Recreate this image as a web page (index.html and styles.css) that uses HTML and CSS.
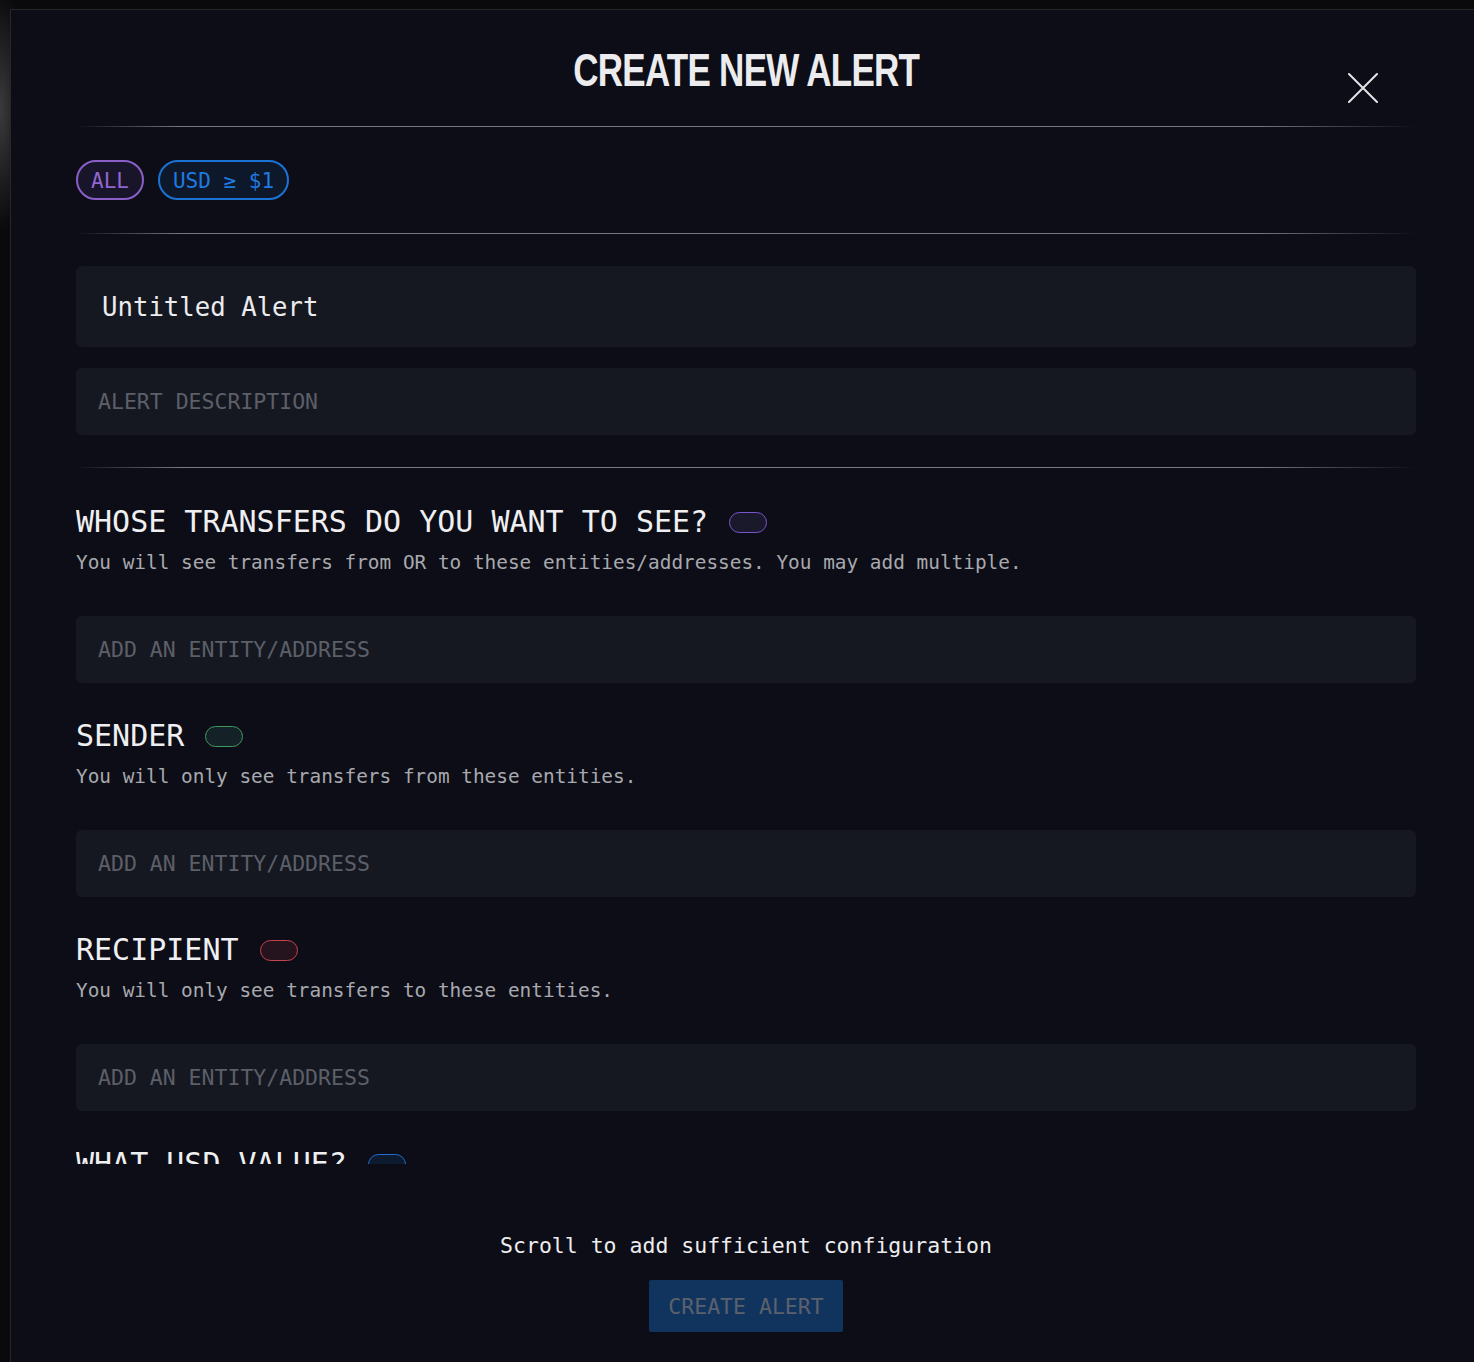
FILE: index.html
```html
<!DOCTYPE html>
<html lang="en">
<head>
<meta charset="utf-8">
<title>Create New Alert</title>
<link rel="stylesheet" href="styles.css">
</head>
<body>
<div class="modal">
  <header class="modal-header">
    <span class="spacer"></span>
    <h1 class="title"><span class="title-text">CREATE NEW ALERT</span></h1>
    <button class="close" aria-label="Close">
      <svg width="30" height="30" viewBox="0 0 30 30"><path d="M1 1 L29 29 M29 1 L1 29" stroke="#e4e4e6" stroke-width="2" fill="none" stroke-linecap="round"/></svg>
    </button>
  </header>
  <div class="divider"></div>
  <div class="scroll">
    <div class="tags">
      <span class="tag tag-all">ALL</span>
      <span class="tag tag-usd">USD ≥ $1</span>
    </div>
    <div class="divider gap-tags"></div>
    <div class="field field-title">Untitled Alert</div>
    <div class="field field-desc placeholder">ALERT DESCRIPTION</div>
    <div class="divider gap-desc"></div>

    <section class="block">
      <div class="block-head"><h2>WHOSE TRANSFERS DO YOU WANT TO SEE?</h2><span class="toggle toggle-purple"></span></div>
      <p class="block-desc">You will see transfers from OR to these entities/addresses. You may add multiple.</p>
      <div class="field field-entity placeholder">ADD AN ENTITY/ADDRESS</div>
    </section>

    <section class="block">
      <div class="block-head"><h2>SENDER</h2><span class="toggle toggle-green"></span></div>
      <p class="block-desc">You will only see transfers from these entities.</p>
      <div class="field field-entity placeholder">ADD AN ENTITY/ADDRESS</div>
    </section>

    <section class="block">
      <div class="block-head"><h2>RECIPIENT</h2><span class="toggle toggle-red"></span></div>
      <p class="block-desc">You will only see transfers to these entities.</p>
      <div class="field field-entity placeholder">ADD AN ENTITY/ADDRESS</div>
    </section>

    <section class="block">
      <div class="block-head"><h2>WHAT USD VALUE?</h2><span class="toggle toggle-blue"></span></div>
    </section>
  </div>
  <footer class="modal-footer">
    <p class="hint">Scroll to add sufficient configuration</p>
    <button class="create">CREATE ALERT</button>
  </footer>
</div>
</body>
</html>
```
FILE: styles.css
```css
html, body {
  margin: 0;
  padding: 0;
  overflow: hidden;
  height: 1362px;
}
body {
  background:
    radial-gradient(ellipse 30px 120px at 0px 110px, rgba(80,80,84,0.7), rgba(80,80,84,0) 100%),
    #0a0a0c;
  font-family: "DejaVu Sans Mono", "Liberation Mono", monospace;
  color: #ececee;
}
.modal {
  margin: 9px 0 0 10px;
  width: 1472px;
  height: 1420px;
  box-sizing: border-box;
  border: 1px solid #26262d;
  background: #0c0d16;
  padding: 0 65px;
}
.modal-header {
  display: grid;
  grid-template-columns: 1fr auto 1fr;
  align-items: start;
  height: 116px;
  box-sizing: border-box;
  padding-top: 36px;
}
.title {
  margin: 0;
  width: 348px;
  display: flex;
  justify-content: center;
  font-family: "Liberation Sans", "Arial", sans-serif;
  font-weight: 700;
  font-size: 47px;
  line-height: 47px;
  color: #ececee;
}
.title-text {
  display: inline-block;
  white-space: nowrap;
  letter-spacing: -1px;
  transform: scaleX(0.745);
  transform-origin: center;
}
.close {
  justify-self: end;
  margin: 27px 38px 0 0;
  padding: 0;
  border: 0;
  background: none;
  width: 30px;
  height: 30px;
  display: block;
}
.close svg { display: block; }
.divider {
  height: 1px;
  background: linear-gradient(90deg, rgba(140,140,146,0) 0%, rgba(140,140,146,0.85) 8%, rgba(140,140,146,0.85) 88%, rgba(140,140,146,0) 100%);
}
.scroll {
  height: 1037px;
  overflow: hidden;
  padding-top: 33px;
  box-sizing: border-box;
}
.tags {
  display: flex;
  gap: 14px;
  height: 40px;
}
.tag {
  box-sizing: border-box;
  height: 40px;
  border: 2px solid;
  border-radius: 20px;
  padding: 1px 13px 0;
  font-size: 21px;
  line-height: 36px;
}
.tag-all {
  border-color: #8a5fc8;
  background: #18152a;
  color: #9166d2;
}
.tag-usd {
  border-color: #1b73d6;
  background: #0e182b;
  color: #1f7ae0;
}
.gap-tags { margin-top: 33px; }
.field {
  box-sizing: border-box;
  background: #151821;
  border-radius: 6px;
  display: flex;
  align-items: center;
}
.field-title {
  margin-top: 32px;
  height: 81px;
  padding-left: 26px;
  font-size: 25.7px;
  color: #ececee;
}
.field-desc {
  margin-top: 21px;
  height: 67px;
  padding-left: 22px;
  font-size: 21.5px;
}
.placeholder { color: #5c5f68; }
.gap-desc { margin-top: 32px; }
.block {
  margin-top: 36px;
}
.block + .block { margin-top: 35px; }
.block-head {
  display: flex;
  align-items: center;
  gap: 21px;
  height: 36px;
}
.block-head h2 {
  margin: 0;
  font-weight: 400;
  font-size: 30px;
  line-height: 36px;
  color: #efeff1;
}
.toggle {
  box-sizing: border-box;
  width: 38px;
  height: 21px;
  border-radius: 11px;
  border: 1.5px solid;
}
.toggle-purple { border-color: #7a55d2; background: #1a192c; }
.toggle-green { border-color: #3f9a5c; background: #142126; }
.toggle-red { border-color: #c8434b; background: #25141d; }
.toggle-blue { border-color: #1f6fd2; background: #0e1a2e; }
.block-desc {
  margin: 11px 0 0;
  font-size: 19.4px;
  line-height: 24px;
  color: #a8a9ae;
}
.field-entity {
  margin-top: 41px;
  height: 67px;
  padding-left: 22px;
  font-size: 21.5px;
}
.modal-footer {
  display: flex;
  flex-direction: column;
  align-items: center;
  padding-top: 69px;
}
.hint {
  margin: 0;
  font-size: 21.5px;
  line-height: 26px;
  color: #ececee;
}
.create {
  margin-top: 21px;
  height: 52px;
  width: 194px;
  border: 0;
  border-radius: 2px;
  background: #11345f;
  color: #5b616c;
  font-family: inherit;
  font-size: 21.5px;
  padding: 0;
}
```
